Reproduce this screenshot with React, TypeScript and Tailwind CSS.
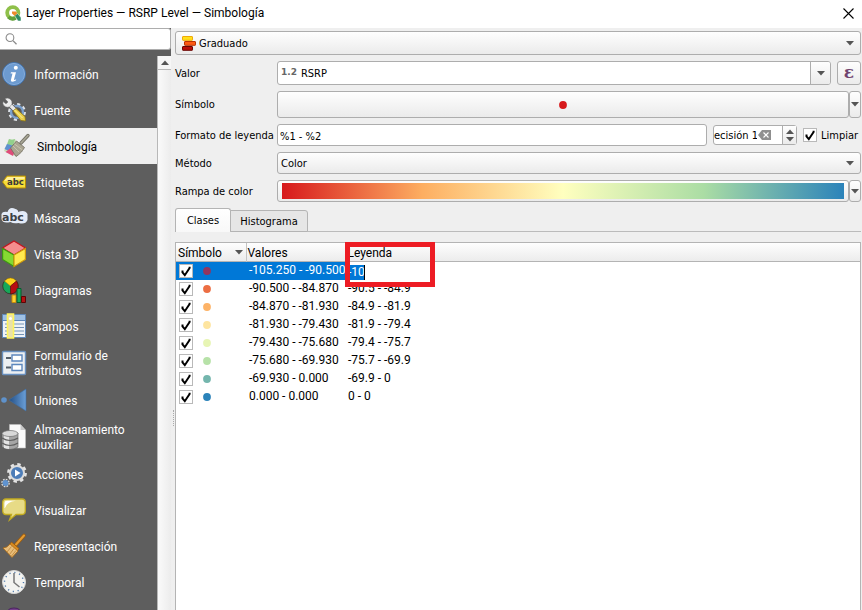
import { useState } from 'react';
import type { ReactNode } from 'react';

const SEGOE = "font-[Roboto,'Open_Sans',sans-serif]";
const TAHOMA = "font-['DejaVu_Sans_Condensed','Noto_Sans',sans-serif]";
const BUTTON = 'rounded-[3px] border border-[#adadad] bg-linear-to-b from-[#fefefe] to-[#ebebeb]';
const FIELD = 'rounded-[3px] border border-[#adadad] bg-white';

function Arrow({ className = '' }: { className?: string }) {
  return (
    <svg aria-hidden="true" width="8" height="5" viewBox="0 0 8 5" className={className}>
      <path d="M0 0h8L4 4.6z" fill="#555" />
    </svg>
  );
}

function Check({ label, id }: { label?: string; id: string }) {
  const [on, setOn] = useState(true);
  return (
    <span className="relative block size-[14px] shrink-0">
      <input
        id={id}
        type="checkbox"
        aria-label={label}
        checked={on}
        onChange={() => setOn(!on)}
        className="block size-[14px] appearance-none border border-[#b9b9b9] bg-white"
      />
      {on && (
        <svg aria-hidden="true" viewBox="0 0 14 14" className="pointer-events-none absolute inset-0 size-[14px]">
          <path d="M3.5 6.5v2l2.3 2.7L10.6 4V2.8" fill="none" stroke="#000" strokeWidth="2" />
        </svg>
      )}
    </span>
  );
}

const gear = (
  <>
    <circle cx="15" cy="11" r="8.4" fill="none" stroke="#e4e4e4" strokeWidth="3" strokeDasharray="3.3 3.3" />
    <circle cx="15" cy="11" r="7" fill="#4d7db8" stroke="#dcdcdc" strokeWidth="2" />
  </>
);

const icons: Record<string, ReactNode> = {
  info: (
    <>
      <circle cx="12" cy="12" r="11.5" fill="#4f81bd" stroke="#4575ae" />
      <circle cx="12" cy="12" r="10.6" fill="#6d9bd0" stroke="#8fb3dd" strokeWidth=".8" />
      <circle cx="13.8" cy="5.8" r="2" fill="#fff" />
      <path d="M9 10.2h5l-2 7.4q0 1 2.2-.4l-.3 1.2q-5.4 3-5-.4l1.6-6.4-1.9-.2z" fill="#fff" />
    </>
  ),
  source: (
    <>
      <circle cx="15" cy="14" r="7.4" fill="none" stroke="#dfe3e8" strokeWidth="3" strokeDasharray="3 2.8" />
      <circle cx="15" cy="14" r="6" fill="none" stroke="#7ba0cd" strokeWidth="2.4" />
      <circle cx="15" cy="14" r="3.4" fill="#555" />
      <path d="M7 6l7 7" stroke="#555" strokeWidth="4.600" />
      <path d="M6 5l8 8" stroke="#e8e8e8" strokeWidth="3.400" />
      <path d="M3 .8A4.600 4.600 0 1 1 1 3.500L4 5.800 6 4z" fill="#ececec" stroke="#6d6d6d" strokeWidth=".5" />
      <path d="M11 13l3-2.500 9 8 .5 4.500-4.500-.5z" fill="#e9cf4b" stroke="#8d7513" strokeWidth=".8" />
      <path d="M12.500 12l8 8" stroke="#fbf0a0" strokeWidth="1" />
    </>
  ),
  symbology: (
    <>
      <path d="M7 5q3 1.500 6 0l6 11-4.500 6.500L2 17z" fill="#c9dcb4" />
      <path d="M7 5q3 1.500 6 0l-2 7-6-1z" fill="#93d08c" />
      <path d="M5 10l5.500 1.500-2 6L2.500 15z" fill="#5d8fd0" />
      <path d="M8 14.500l5 2-2 5.500-7.500-4z" fill="#df4d7a" />
      <path d="M19 9L26 1.500" stroke="#77756a" strokeWidth="3.400" strokeLinecap="round" />
      <path d="M19 9L26 1.500" stroke="#aaa897" strokeWidth="1.600" strokeLinecap="round" />
      <path d="M14.500 7l8 6.500-3 4.500q-3 3-5.500 4.500L8.500 14z" fill="#aaa592" stroke="#716d60" strokeWidth=".8" />
      <path d="M12.500 10l8 6M11 12l6 6" stroke="#d0cbb5" strokeWidth=".8" />
    </>
  ),
  labels: (
    <>
      <path d="M.5 12L5 6h18.500v12H5z" fill="#f6dd38" stroke="#b48b07" />
      <path d="M2 11l3.500-4H22.500v2z" fill="#fff09a" />
      <text x="5" y="15" fontSize="8.500" fontWeight="700" fontFamily="DejaVu Sans" fill="#3a3a3a">abc</text>
    </>
  ),
  mask: (
    <>
      <path d="M-.5 8q1-3 6-2 2-6 8-3 3 1 2.500 3 7-3 9.500 2v6q-2 5-9 3-5 1-8-1-8 2-9-3z" fill="#e3ebf8" />
      <text x="0" y="14.500" fontSize="11" fontWeight="700" fontFamily="DejaVu Sans" fill="#3b4046">abc</text>
    </>
  ),
  cube: (
    <>
      <path d="M12 -1l11.500 7-11.500 7L.5 6z" fill="#f58d8d" stroke="#c4131d" strokeWidth="1.200" />
      <path d="M.6 6.500L12 13.100V24.500L.6 17.500z" fill="#85da32" stroke="#3c9a10" strokeWidth="1.200" />
      <path d="M23.400 6.500L12 13.100V24.500l11.400-7z" fill="#ffe94f" stroke="#cf9a0b" strokeWidth="1.200" />
    </>
  ),
  diagrams: (
    <>
      <circle cx="8.500" cy="8" r="7.800" fill="#17a85a" stroke="#293a22" strokeWidth=".8" />
      <path d="M8.500 8L2.500 3q6-6 12 0z" fill="#ffd51d" stroke="#c98e07" strokeWidth=".6" />
      <path d="M8.500 8l6-5q4 7-2 12l-4 1z" fill="#b80f12" stroke="#5d0606" strokeWidth=".6" />
      <path d="M10 17h4v7.500h-4z" fill="#ffd12f" stroke="#c58b0b" />
      <path d="M15 10.500h4v14h-4z" fill="#18a75a" stroke="#075c2c" />
      <path d="M19.500 18.500h4v6h-4z" fill="#b51213" stroke="#5b0606" />
    </>
  ),
  fields: (
    <>
      <path d="M.5.500h23v23H.5z" fill="#eef2f7" stroke="#5e87b8" />
      <path d="M1 1h22v5H1z" fill="#9fc1e4" />
      <path d="M1 6.500h22" stroke="#5e87b8" />
      <path d="M3 10h19M3 13.500h19M3 17h19M3 20.500h19" stroke="#7593b5" strokeWidth="1.200" />
      <path d="M5.500 0h6v24h-6z" fill="#e9e1a8" stroke="#fff45c" strokeWidth="1.600" />
      <circle cx="8.500" cy="4.500" r="1.500" fill="#fff" />
    </>
  ),
  form: (
    <>
      <rect x=".5" y=".5" width="23" height="23" rx="1" fill="#eceff2" stroke="#6990bf" strokeWidth="1.400" />
      <path d="M10 4h10v6H10zM10 13.500h10v6H10z" fill="#fff" stroke="#5c87bd" strokeWidth="1.400" />
      <path d="M4 7h5M4 16.500h5" stroke="#555f69" strokeWidth="2" />
    </>
  ),
  joins: (
    <>
      <defs>
        <linearGradient id="joinFill">
          <stop offset="0" stopColor="#234f86" />
          <stop offset="1" stopColor="#6a9fd8" />
        </linearGradient>
      </defs>
      <circle cx="2" cy="12" r="2.800" fill="#5f92cb" />
      <path d="M7 12L24 1v22z" fill="url(#joinFill)" stroke="#3d6da5" strokeWidth=".6" />
    </>
  ),
  storage: (
    <>
      <path d="M7.500-.500h11l5 5.500v18h-16z" fill="#fbfbfb" stroke="#bdbdbd" strokeWidth=".6" />
      <path d="M18.500-.500v5.500h5z" fill="#c8c8c8" />
      <path d="M0 8v14q8 5 16 0V8z" fill="#a5a5a5" stroke="#555" strokeWidth=".6" />
      <path d="M2 10v13q3 1 5 1V11z" fill="#e3e3e3" />
      <ellipse cx="8" cy="8.500" rx="7.900" ry="3" fill="#d9d9d9" stroke="#707070" strokeWidth=".7" />
      <path d="M0 13q8 5 16 0M0 18q8 5 16 0" fill="none" stroke="#5e5e5e" strokeWidth="1.200" />
    </>
  ),
  actions: (
    <>
      {gear}
      <path d="M13 7.500l5.500 3.500L13 14.500z" fill="#fff" />
      <circle cx="3.500" cy="21" r="3.600" fill="none" stroke="#dcdcdc" strokeWidth="1.400" strokeDasharray="1.700 1.100" />
      <circle cx="3.500" cy="21" r="2.900" fill="#5f93cf" />
    </>
  ),
  display: (
    <>
      <path d="M4 1h16q3.300 0 3.300 3.500v8q0 4-3.300 4h-6l-6.500 5.500 2-5.500H4Q.7 16.500.7 12.500v-8Q.7 1 4 1z" fill="#e7db86" stroke="#c2ab1f" strokeWidth="1.300" />
      <path d="M2.500 10V5q0-2.300 2.500-2.300h9Q5 3.500 3 10z" fill="#fff" />
    </>
  ),
  rendering: (
    <>
      <path d="M14 10.500L22 1.500" stroke="#9d5c0d" strokeWidth="3.600" strokeLinecap="round" />
      <path d="M14 10.500L22 1.500" stroke="#e39b33" strokeWidth="2" strokeLinecap="round" />
      <path d="M9.500 8l7.500 6.500-1.500 2.500-8-6.500z" fill="#d88b21" stroke="#945507" strokeWidth=".7" />
      <path d="M8 10l8 7-6 6.500L1 14q4 0 7-4z" fill="#e8bd7a" stroke="#ae6b12" strokeWidth=".8" />
      <path d="M9.500 12.500L5 18M12 14.500L7.500 20.500M14 16.500L9.500 22" stroke="#b77c2d" strokeWidth=".7" />
    </>
  ),
  temporal: (
    <>
      <circle cx="12" cy="12" r="11.500" fill="#f3f3f0" stroke="#d8d8d8" />
      <circle cx="12" cy="12" r="9.500" fill="none" stroke="#4d78aa" strokeWidth="1.400" strokeDasharray="1.200 3.774" />
      <path d="M12 3v9.500l5.500 4.500" fill="none" stroke="#777" strokeWidth="1.500" />
    </>
  ),
  variables: (
    <>
      <path d="M5 8q0-6 7-6t7 6v14H5z" fill="#74408c" stroke="#4b2260" />
    </>
  ),
};

const sections = [
  ['info', 'Información'],
  ['source', 'Fuente'],
  ['symbology', 'Simbología'],
  ['labels', 'Etiquetas'],
  ['mask', 'Máscara'],
  ['cube', 'Vista 3D'],
  ['diagrams', 'Diagramas'],
  ['fields', 'Campos'],
  ['form', 'Formulario de atributos'],
  ['joins', 'Uniones'],
  ['storage', 'Almacenamiento auxiliar'],
  ['actions', 'Acciones'],
  ['display', 'Visualizar'],
  ['rendering', 'Representación'],
  ['temporal', 'Temporal'],
  ['variables', ''],
];
const tall = ['form', 'storage'];

function Sidebar() {
  const [current, setCurrent] = useState('symbology');
  return (
    <aside className="flex w-[171px] shrink-0 flex-col bg-[#5e5e5e]">
      <label className="flex h-[22px] shrink-0 items-center rounded-r-[3px] border border-l-0 border-[#adadad] bg-white pl-[5px]">
        <svg aria-hidden="true" width="14" height="14" viewBox="0 0 14 14" fill="none" stroke="#8a8a8a">
          <circle cx="5.500" cy="5.500" r="4.300" strokeWidth="1.200" />
          <path d="M8.800 8.800l4 4" strokeWidth="1.500" />
        </svg>
        <input aria-label="Buscar" className="ml-1 w-full min-w-0 text-xs outline-none" />
      </label>
      <div className="mt-1.5 flex min-h-0 flex-1">
        <nav className="min-w-0 flex-1 overflow-hidden">
          {sections.map(([key, name]) => (
            <button
              key={key}
              onClick={() => setCurrent(key)}
              className={`flex w-full items-center pl-0.5 text-left text-[12px] leading-[15px] ${
                tall.includes(key) ? 'h-[38px]' : 'h-9'
              } ${key === current ? 'gap-[11px] bg-[#efefef] text-black' : 'gap-2 text-white'}`}
            >
              <svg aria-hidden="true" viewBox="0 0 24 24" className="size-6 shrink-0 overflow-visible">
                {icons[key]}
              </svg>
              <span className={tall.includes(key) ? 'w-24 pt-0.5' : 'pt-0.5'}>{name}</span>
            </button>
          ))}
        </nav>
        <div className="flex w-[14px] shrink-0 flex-col border-l border-[#b8b8b8] bg-linear-to-r from-[#fafafa] to-[#ececec]">
          <button aria-label="Subir" className="flex h-[14px] items-center justify-center border-b border-[#b8b8b8] bg-[#f6f6f6]">
            <Arrow className="rotate-180" />
          </button>
        </div>
      </div>
    </aside>
  );
}

const classes = [
  ['#92355f', '-105.250 - -90.500', ''],
  ['#ec6e43', '-90.500 - -84.870', '-90.5 - -84.9'],
  ['#fdb367', '-84.870 - -81.930', '-84.9 - -81.9'],
  ['#fee5a0', '-81.930 - -79.430', '-81.9 - -79.4'],
  ['#e7f5b4', '-79.430 - -75.680', '-79.4 - -75.7'],
  ['#b7e2a8', '-75.680 - -69.930', '-75.7 - -69.9'],
  ['#74b6ad', '-69.930 - 0.000', '-69.9 - 0'],
  ['#2b83ba', '0.000 - 0.000', '0 - 0'],
];

function ClassTable() {
  return (
    <div className="relative mt-2.5 min-h-0 flex-1 border border-b-0 border-[#b4b4b4] bg-white text-[12px]">
      <table className="w-full table-fixed border-collapse">
        <colgroup>
          <col className="w-[70px]" />
          <col className="w-[99px]" />
          <col />
        </colgroup>
        <thead>
          <tr className="h-[19px] bg-linear-to-b from-[#fefefe] to-[#ebebeb] text-left leading-4 shadow-[inset_0_-1px_0_#b4b4b4]">
            <th className="border-r border-[#c4c4c4] p-0 pl-0.5 font-normal">
              <span className="flex items-start justify-between pr-[3px]">
                Símbolo
                <Arrow className="mt-[5px]" />
              </span>
            </th>
            <th className="border-r border-[#c4c4c4] p-0 pl-px font-normal">Valores</th>
            <th className="p-0 pl-0.5 font-normal">Leyenda</th>
          </tr>
        </thead>
        <tbody>
          {classes.map(([color, range, legend], i) => (
            <tr key={range} className="h-[18px] whitespace-nowrap leading-4">
              <td className={`p-0 pl-[3px] ${i === 0 ? 'bg-[#0078d7]' : ''}`}>
                <span className="flex items-center gap-[10px]">
                  <Check id={`class-${i}`} label={range} />
                  <svg aria-hidden="true" width="8" height="8" viewBox="0 0 8 8">
                    <circle cx="4" cy="4" r="3.900" fill={color} />
                  </svg>
                </span>
              </td>
              <td className={`p-0 pb-0.5 pl-[3px] ${i === 0 ? 'bg-[#0078d7] text-white' : ''}`}>{range}</td>
              <td className={`p-0 pl-[3px] ${i === 0 ? 'pt-0.5' : 'pb-0.5'}`}>
                {i === 0 ? (
                  <input
                    aria-label="Leyenda"
                    defaultValue="-10"
                    className="block h-[15px] w-[17px] border-r border-black bg-[#0078d7] text-white outline-none"
                  />
                ) : (
                  legend
                )}
              </td>
            </tr>
          ))}
        </tbody>
      </table>
      <div className="pointer-events-none absolute -top-px left-[169px] h-[45px] w-[90px] border-5 border-[#ed1c24]" />
    </div>
  );
}

function SideArrow({ label }: { label: string }) {
  return (
    <button aria-label={label} className={`flex w-3 shrink-0 items-center justify-center ${BUTTON}`}>
      <Arrow />
    </button>
  );
}

function Select({ id, value, label, pad }: { id: string; value: string; label?: string; pad: string }) {
  return (
    <div className="relative flex min-w-0 flex-1 items-center">
      <select id={id} aria-label={label} className={`size-full appearance-none pt-0.5 outline-none ${pad} ${BUTTON}`}>
        <option>{value}</option>
      </select>
      <Arrow className="pointer-events-none absolute right-[7px]" />
    </div>
  );
}

export default function App() {
  return (
    <div className={`flex h-screen flex-col overflow-hidden bg-[#efefef] text-black ${SEGOE}`}>
      <header className="flex h-7 shrink-0 items-center bg-white pb-0.5 pl-[5px] pr-2">
        <svg aria-hidden="true" width="17" height="17" viewBox="0 0 17 17">
          <circle cx="7.800" cy="7.800" r="5.600" fill="none" stroke="#8fc04a" strokeWidth="3.800" />
          <path d="M3.500 12a5.600 5.600 0 0 0 7 .8" fill="none" stroke="#62a03a" strokeWidth="3.800" />
          <path d="M9.500 10.500l3-2 3.500 4v3.500h-3z" fill="#2f8a63" stroke="#fff" strokeWidth=".5" />
          <path d="M7 6.500h4l1.300 1.800-2.600 2.600L7 8.500z" fill="#ee8a2a" />
        </svg>
        <h1 className="ml-1 flex-1 text-[12px]">Layer Properties — RSRP Level — Simbología</h1>
        <button aria-label="Cerrar">
          <svg aria-hidden="true" width="11" height="11" viewBox="0 0 11 11" stroke="#000" strokeWidth="1.100">
            <path d="M.5.500l10 10M10.500.500l-10 10" />
          </svg>
        </button>
      </header>
      <div className="flex min-h-0 flex-1">
        <Sidebar />
        <div className="flex w-1 shrink-0 items-end justify-center">
          <div className="mb-[184px] h-4 border-l border-dotted border-[#aaa]" />
        </div>
        <main className={`flex min-w-0 flex-1 flex-col pr-px pt-[3px] text-[11px] ${TAHOMA}`}>
          <div className="relative flex h-6 shrink-0">
            <Select id="renderer" label="Tipo de símbolo" value="Graduado" pad="pl-[23px]" />
            <svg aria-hidden="true" width="14" height="15" viewBox="0 0 14 15" className="pointer-events-none absolute left-[7px] top-[5px]">
              <rect x=".5" y=".5" width="10" height="3.800" rx=".5" fill="#ffdf1a" stroke="#efa908" />
              <rect x="2.500" y="5.500" width="11" height="3.800" rx=".5" fill="#ff5a14" stroke="#b63205" />
              <rect x=".5" y="10.500" width="10" height="3.800" rx=".5" fill="#b80d08" stroke="#6b0503" />
            </svg>
          </div>
          <div className="mt-1.5 grid grid-cols-[102px_minmax(0,1fr)] items-center gap-y-1.5">
            <label htmlFor="value" className="pt-0.5">Valor</label>
            <div className="flex h-6 gap-1.5">
              <div className={`flex min-w-0 flex-1 ${FIELD}`}>
                <span className="pl-[3px] font-['DejaVu_Sans'] text-[9px] font-bold leading-5 text-[#666]">1.2</span>
                <input id="value" defaultValue="RSRP" className="ml-1 min-w-0 flex-1 pt-0.5 outline-none" />
                <button aria-label="Elegir campo" className="flex w-5 items-center justify-center rounded-r-[2px] border-l border-[#adadad] bg-linear-to-b from-[#fefefe] to-[#ebebeb]">
                  <Arrow />
                </button>
              </div>
              <button aria-label="Expresión" className={`flex w-6 shrink-0 items-center justify-center pb-0.5 font-['DejaVu_Serif',serif] text-[17px] font-bold leading-none text-[#70446f] ${BUTTON}`}>
                ε
              </button>
            </div>

            <span className="pt-0.5">Símbolo</span>
            <div className="flex h-[27px]">
              <button aria-label="Cambiar símbolo" className={`flex flex-1 items-center justify-center ${BUTTON}`}>
                <svg aria-hidden="true" width="8" height="8" viewBox="0 0 8 8">
                  <circle cx="4" cy="4" r="3.900" fill="#d7191c" />
                </svg>
              </button>
              <SideArrow label="Opciones de símbolo" />
            </div>

            <label htmlFor="format" className="whitespace-nowrap pt-0.5">Formato de leyenda</label>
            <div className="flex h-[22px] items-center">
              <input id="format" defaultValue="%1 - %2" className={`h-full min-w-0 flex-1 px-0.5 pt-0.5 outline-none ${FIELD}`} />
              <div className={`ml-1.5 flex h-5 w-[84px] items-center ${FIELD}`}>
                <input aria-label="Precisión" defaultValue="ecisión 1" className="w-[43px] pt-0.5 outline-none" />
                <button aria-label="Borrar" className="ml-px mr-auto">
                  <svg aria-hidden="true" width="13" height="10" viewBox="0 0 13 10">
                    <path d="M0 5l4-5h9v10H4z" fill="#8f8f8f" />
                    <path d="M5.500 2.500l5 5M10.500 2.500l-5 5" stroke="#fff" strokeWidth="1.100" />
                  </svg>
                </button>
                <div className="flex h-full w-[14px] flex-col items-center justify-center gap-[3px] border-l border-[#adadad] bg-linear-to-b from-[#fefefe] to-[#ebebeb]">
                  <button aria-label="Aumentar"><Arrow className="block rotate-180" /></button>
                  <button aria-label="Disminuir"><Arrow className="block" /></button>
                </div>
              </div>
              <label htmlFor="trim" className="ml-1.5 flex w-[58px] items-center gap-1">
                <Check id="trim" />
                <span className="pt-0.5">Limpiar</span>
              </label>
            </div>

            <label htmlFor="method" className="pt-0.5">Método</label>
            <div className="flex h-[22px]">
              <Select id="method" value="Color" pad="pl-[3px]" />
            </div>

            <span className="pt-0.5">Rampa de color</span>
            <div className="flex h-[22px]">
              <button aria-label="Rampa de color" className={`flex flex-1 px-1 py-0.5 ${BUTTON}`}>
                <span className="h-4 flex-1 bg-[linear-gradient(to_right,#d7191c,#fdae61_25%,#ffffbf_50%,#abdda4_75%,#2b83ba)]" />
              </button>
              <SideArrow label="Opciones de rampa" />
            </div>
          </div>

          <div role="tablist" className="mt-1.5 flex h-6 shrink-0 items-end shadow-[inset_0_-1px_0_#bbb]">
            <button role="tab" aria-selected="true" className="h-6 w-14 rounded-t-[3px] border border-b-0 border-[#b4b4b4] bg-linear-to-b from-white to-[#f8f8f8] pt-0.5">
              Clases
            </button>
            <button role="tab" aria-selected="false" className="-ml-px h-[22px] w-[78px] rounded-tr-[3px] border border-[#b4b4b4] bg-[#e6e6e6] pt-0.5">
              Histograma
            </button>
          </div>
          <div className={`flex min-h-0 flex-1 flex-col ${SEGOE}`}>
            <ClassTable />
          </div>
        </main>
      </div>
    </div>
  );
}
